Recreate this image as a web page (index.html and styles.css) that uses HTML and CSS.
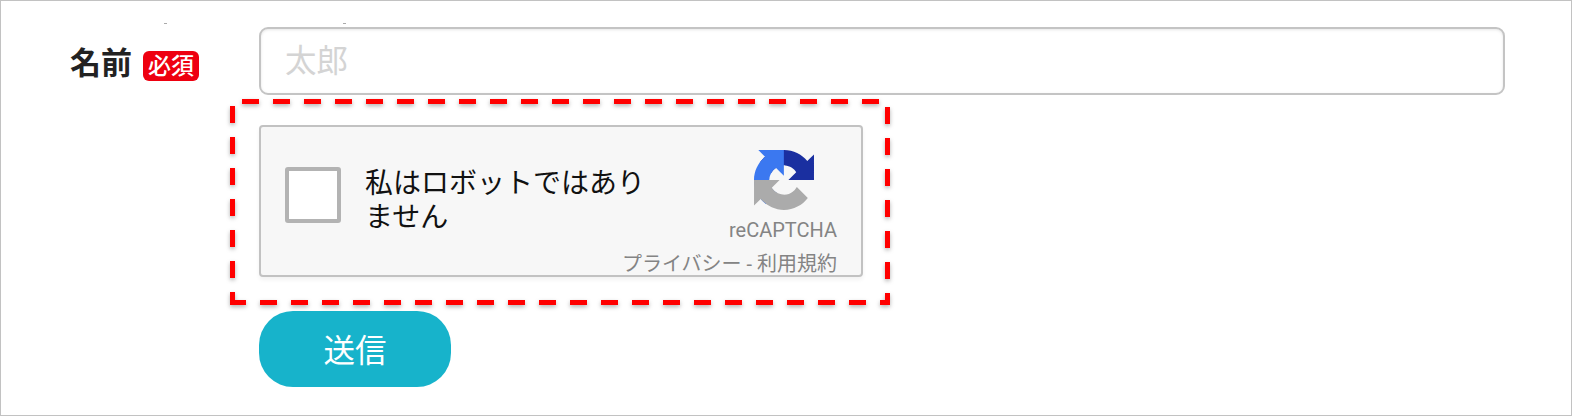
FILE: index.html
```html
<!DOCTYPE html>
<html lang="ja">
<head>
    <meta charset="UTF-8">
    <meta name="viewport" content="width=device-width, initial-scale=1.0">
    <title>お問い合わせ</title>
    <link rel="stylesheet" href="styles.css">
</head>
<body>
    <div class="frame">
        <span class="speck speck-a"></span>
        <span class="speck speck-b"></span>

        <form class="form-row">
            <div class="label">
                <span class="label-text">名前</span>
                <span class="required">必須</span>
            </div>
            <input class="text-input" type="text" placeholder="太郎">
        </form>

        <div class="captcha-wrap">
            <div class="captcha">
                <div class="captcha-main">
                    <span class="checkbox"></span>
                    <p class="captcha-text">私はロボットではあり<br>ません</p>
                </div>
                <div class="captcha-brand">
                    <svg class="captcha-logo" viewBox="0 0 64 64">
                        <path d="M64 31.955l-.033-1.37V4.687l-7.16 7.16C50.948 4.674 42.033.093 32.05.093c-10.4 0-19.622 4.96-25.458 12.64l11.736 11.86a15.55 15.55 0 0 1 4.754-5.334c2.05-1.6 4.952-2.906 8.968-2.906.485 0 .86.057 1.135.163 4.976.393 9.288 3.14 11.828 7.124l-8.307 8.307 26.2.001" fill="#1a2fa0"/>
                        <path d="M31.862.094l-1.37.033H4.594l7.16 7.16C4.58 13.147 0 22.06 0 32.046c0 10.4 4.96 19.622 12.64 25.458l11.86-11.736a15.55 15.55 0 0 1-5.334-4.754c-1.6-2.05-2.906-4.952-2.906-8.968 0-.485.057-.86.163-1.135.393-4.976 3.14-9.288 7.124-11.828l8.307 8.307V.095" fill="#3b78f0"/>
                        <path d="M.001 32.045l.033 1.37v25.898l7.16-7.16c5.86 7.173 14.774 11.754 24.76 11.754 10.4 0 19.622-4.96 25.458-12.64l-11.736-11.86a15.55 15.55 0 0 1-4.754 5.334c-2.05 1.6-4.952 2.906-8.968 2.906-.485 0-.86-.057-1.135-.163-4.976-.393-9.288-3.14-11.828-7.124l8.307-8.307H.001" fill="#ababab"/>
                    </svg>
                    <span class="captcha-name">reCAPTCHA</span>
                    <span class="captcha-links">プライバシー - 利用規約</span>
                </div>
            </div>

            <!-- 赤い破線の枠 -->
            <svg class="dash-frame" width="660" height="206">
                <line class="dash" x1="12" y1="2.5" x2="660" y2="2.5"/>
                <line class="dash" x1="2.5" y1="7" x2="2.5" y2="206"/>
                <line class="dash dash-bottom" x1="0" y1="203.5" x2="660" y2="203.5"/>
                <line class="dash" x1="657.5" y1="8" x2="657.5" y2="206"/>
            </svg>
        </div>

        <button class="submit" type="button">送信</button>
    </div>
</body>
</html>
```

FILE: styles.css
```css
* {
    box-sizing: border-box;
}
body {
    margin: 0;
    font-family: "Liberation Sans", "Noto Sans CJK JP", sans-serif;
    background-color: #fff;
}
.frame {
    position: relative;
    width: 1572px;
    height: 416px;
    padding: 26px 0 0 258px;
    border: 1px solid #c2c2c2;
}
.speck {
    position: absolute;
    top: 22px;
    width: 3px;
    height: 1px;
    background-color: #aaa;
}
.speck-a {
    left: 163px;
}
.speck-b {
    left: 342px;
}
.form-row {
    display: flex;
    align-items: center;
    margin-left: -258px;
}
.label {
    display: flex;
    align-items: center;
    width: 258px;
    padding: 6px 0 0 69px;
    gap: 11px;
}
.label-text {
    font-size: 31px;
    line-height: 36px;
    font-weight: bold;
    color: #222;
}
.required {
    width: 56px;
    height: 30px;
    margin-top: 3px;
    border-radius: 6px;
    background-color: #ee0010;
    color: #fff;
    font-size: 23px;
    font-weight: 500;
    line-height: 30px;
    text-align: center;
}
.text-input {
    width: 1246px;
    height: 68px;
    padding: 0 24px;
    border: 2px solid #c4c4c4;
    border-radius: 9px;
    box-shadow: inset 0 1px 3px rgba(0,0,0,0.1);
    font-family: inherit;
    font-size: 31.5px;
    outline: none;
}
.text-input::placeholder {
    color: #d4d4d4;
}
.captcha-wrap {
    position: relative;
    width: 604px;
    margin-top: 30px;
}
.captcha {
    display: flex;
    justify-content: space-between;
    height: 152px;
    border: 2px solid #c2c2c2;
    border-radius: 4px;
    background-color: #f7f7f7;
    box-shadow: 0 3px 4px rgba(0,0,0,0.05);
}
.captcha-main {
    display: flex;
    align-items: flex-start;
    flex: 1;
    min-width: 0;
    padding: 40px 0 0 24px;
}
.checkbox {
    flex: none;
    width: 56px;
    height: 56px;
    border: 4px solid #b3b3b3;
    border-radius: 3px;
    background-color: #fff;
}
.captcha-text {
    margin: 0 0 0 24px;
    font-size: 28px;
    line-height: 34px;
    color: #111;
    white-space: nowrap;
}
.captcha-brand {
    display: flex;
    flex-direction: column;
    align-items: flex-end;
    flex: none;
    width: 0;
    padding: 23px 24px 0 0;
    font-family: Roboto, "Noto Sans CJK JP", sans-serif;
    color: #848484;
}
.captcha-logo {
    flex: none;
    width: 60px;
    height: 60px;
    margin-right: 23px;
}
.captcha-name {
    margin-top: 8px;
    font-size: 20px;
    line-height: 24px;
}
.captcha-links {
    margin-top: 9px;
    font-size: 20px;
    line-height: 26px;
    white-space: nowrap;
}
.dash-frame {
    position: absolute;
    left: -29px;
    top: -26px;
    overflow: visible;
    filter: drop-shadow(0 2px 2px rgba(0,0,0,0.3));
}
.dash {
    stroke: #ff0000;
    stroke-width: 5;
    stroke-dasharray: 17 14;
}
.dash-bottom {
    stroke-dashoffset: 1;
}
.submit {
    display: block;
    width: 192px;
    height: 76px;
    margin-top: 34px;
    padding-bottom: 4px;
    border: none;
    border-radius: 34px;
    background-color: #17b3cb;
    color: #fff;
    font-family: inherit;
    font-size: 31.5px;
}
```
